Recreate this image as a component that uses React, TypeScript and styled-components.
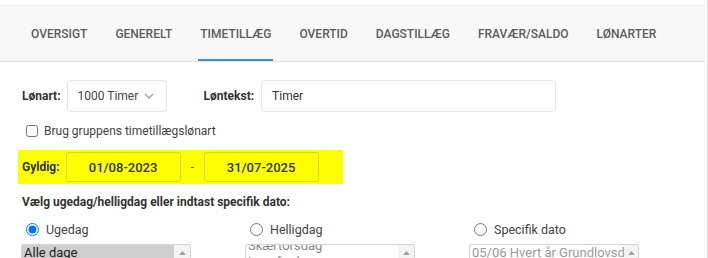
import React from "react";
import styled, { createGlobalStyle } from "styled-components";

const Global = createGlobalStyle`
  html, body { margin: 0; padding: 0; background: #fff; }
  body { font-family: Roboto, "Liberation Sans", Arial, sans-serif; font-size: 12px; color: #333; overflow: hidden; }
  * { box-sizing: border-box; }
`;

const Frame = styled.div`
  width: 708px;
  height: 258px;
  border-right: 1px solid #dcdcdc;
  overflow: hidden;
`;

const TabBar = styled.nav`
  margin-top: 5px;
  width: 705px;
  height: 57px;
  background: #f8f8f8;
  border-top: 1px solid #ededed;
  border-bottom: 1px solid #e2e2e2;
  display: flex;
  align-items: stretch;
  gap: 24px;
  padding-left: 29px;
`;

const Tab = styled.div<{ $active?: boolean }>`
  position: relative;
  display: flex;
  align-items: center;
  padding: 0 2px;
  font-size: 12px;
  font-weight: 500;
  color: #5c5c5c;
  &::after {
    content: "";
    position: absolute;
    left: 0;
    right: 0;
    bottom: 0;
    height: 2px;
    background: ${(p) => (p.$active ? "#3b8fe6" : "transparent")};
  }
`;

const Content = styled.div`
  padding: 18px 0 0 22px;
`;

const FieldRow = styled.div`
  display: flex;
  align-items: center;
  height: 32px;
`;

const Label = styled.span<{ $gapLeft?: number; $gapRight?: number }>`
  font-weight: 700;
  color: #333;
  margin-left: ${(p) => p.$gapLeft ?? 0}px;
  margin-right: ${(p) => p.$gapRight ?? 6}px;
`;

const SelectBox = styled.div`
  width: 100px;
  height: 32px;
  border: 1px solid #e4e4e4;
  border-radius: 4px;
  display: flex;
  align-items: center;
  justify-content: space-between;
  padding: 0 12px 0 10px;
  color: #444;
`;

const TextInput = styled.div`
  width: 295px;
  height: 32px;
  border: 1px solid #e4e4e4;
  border-radius: 4px;
  display: flex;
  align-items: center;
  padding: 0 10px;
  color: #333;
`;

const CheckRow = styled.label`
  display: flex;
  align-items: center;
  margin-top: 9px;
  height: 20px;
  color: #444;
  input { margin: 0 6px 0 4px; width: 12px; height: 12px; }
`;

const ValidBand = styled.div`
  margin-top: 9px;
  margin-left: -4px;
  width: 325px;
  height: 34px;
  background: #ffff00;
  display: flex;
  align-items: center;
  padding-left: 4px;
`;

const DateBox = styled.div`
  width: 115px;
  height: 30px;
  border: 1px solid #e2d400;
  border-radius: 3px;
  display: flex;
  align-items: center;
  justify-content: center;
  font-size: 13px;
  font-weight: 500;
  color: #333;
`;

const Dash = styled.span`
  width: 23px;
  text-align: center;
  color: #555;
`;

const Heading = styled.div`
  margin-top: 10px;
  height: 16px;
  line-height: 16px;
  font-weight: 700;
  color: #333;
`;

const Columns = styled.div`
  margin-top: 10px;
  margin-left: -1px;
  display: grid;
  grid-template-columns: 224px 224px 224px;
`;

const Column = styled.div`
  display: flex;
  flex-direction: column;
`;

const RadioRow = styled.label`
  display: flex;
  align-items: center;
  height: 18px;
  font-size: 12.5px;
  color: #444;
  input { margin: 0 7px 0 5px; width: 13px; height: 13px; }
`;

const ListBox = styled.div<{ $disabled?: boolean }>`
  margin-top: 6px;
  width: 170px;
  height: 80px;
  border: 1px solid #d4d4d4;
  border-radius: 2px;
  display: flex;
  overflow: hidden;
  color: ${(p) => (p.$disabled ? "#9a9a9a" : "#222")};
`;

const ListItems = styled.div<{ $offset?: number }>`
  flex: 1;
  min-width: 0;
  margin-top: ${(p) => p.$offset ?? 0}px;
`;

const ListItem = styled.div<{ $selected?: boolean; $muted?: boolean }>`
  height: 16px;
  line-height: 15px;
  padding-left: 2px;
  font-size: 13px;
  white-space: nowrap;
  overflow: hidden;
  background: ${(p) => (p.$selected ? "#cecece" : "transparent")};
  color: ${(p) => (p.$muted ? "#888" : "inherit")};
`;

const ScrollTrack = styled.div<{ $narrow?: boolean }>`
  width: ${(p) => (p.$narrow ? 13 : 16)}px;
  flex: none;
  background: #f4f4f4;
  display: flex;
  justify-content: center;
  padding-top: 6px;
`;

const Chevron = () => (
  <svg width="10" height="6" viewBox="0 0 10 6">
    <polyline points="1,1 5,5 9,1" fill="none" stroke="#a0a0a0" strokeWidth="1.3" />
  </svg>
);

const UpArrow = () => (
  <svg width="7" height="4" viewBox="0 0 7 4">
    <polygon points="0,4 3.5,0 7,4" fill="#a3a3a3" />
  </svg>
);

const tabs = ["OVERSIGT", "GENERELT", "TIMETILLÆG", "OVERTID", "DAGSTILLÆG", "FRAVÆR/SALDO", "LØNARTER"];

export default function App() {
  return (
    <Frame>
      <Global />
      <TabBar>
        {tabs.map((t) => (
          <Tab key={t} $active={t === "TIMETILLÆG"}>{t}</Tab>
        ))}
      </TabBar>
      <Content>
        <FieldRow>
          <Label>Lønart:</Label>
          <SelectBox>
            <span>1000 Timer</span>
            <Chevron />
          </SelectBox>
          <Label $gapLeft={37} $gapRight={7}>Løntekst:</Label>
          <TextInput>Timer</TextInput>
        </FieldRow>
        <CheckRow>
          <input type="checkbox" readOnly />
          Brug gruppens timetillægslønart
        </CheckRow>
        <ValidBand>
          <Label>Gyldig:</Label>
          <DateBox>01/08-2023</DateBox>
          <Dash>-</Dash>
          <DateBox>31/07-2025</DateBox>
        </ValidBand>
        <Heading>Vælg ugedag/helligdag eller indtast specifik dato:</Heading>
        <Columns>
          <Column>
            <RadioRow>
              <input type="radio" name="t" defaultChecked />
              Ugedag
            </RadioRow>
            <ListBox>
              <ListItems>
                <ListItem $selected>Alle dage</ListItem>
                <ListItem>Mandag</ListItem>
                <ListItem>Tirsdag</ListItem>
              </ListItems>
              <ScrollTrack><UpArrow /></ScrollTrack>
            </ListBox>
          </Column>
          <Column>
            <RadioRow>
              <input type="radio" name="t" />
              Helligdag
            </RadioRow>
            <ListBox>
              <ListItems $offset={-7}>
                <ListItem $muted>Skærtorsdag</ListItem>
                <ListItem $muted>Langfredag</ListItem>
                <ListItem $muted>Påskedag</ListItem>
              </ListItems>
              <ScrollTrack><UpArrow /></ScrollTrack>
            </ListBox>
          </Column>
          <Column>
            <RadioRow>
              <input type="radio" name="t" />
              Specifik dato
            </RadioRow>
            <ListBox $disabled>
              <ListItems>
                <ListItem>05/06 Hvert år Grundlovsdag</ListItem>
              </ListItems>
              <ScrollTrack $narrow><UpArrow /></ScrollTrack>
            </ListBox>
          </Column>
        </Columns>
      </Content>
    </Frame>
  );
}
